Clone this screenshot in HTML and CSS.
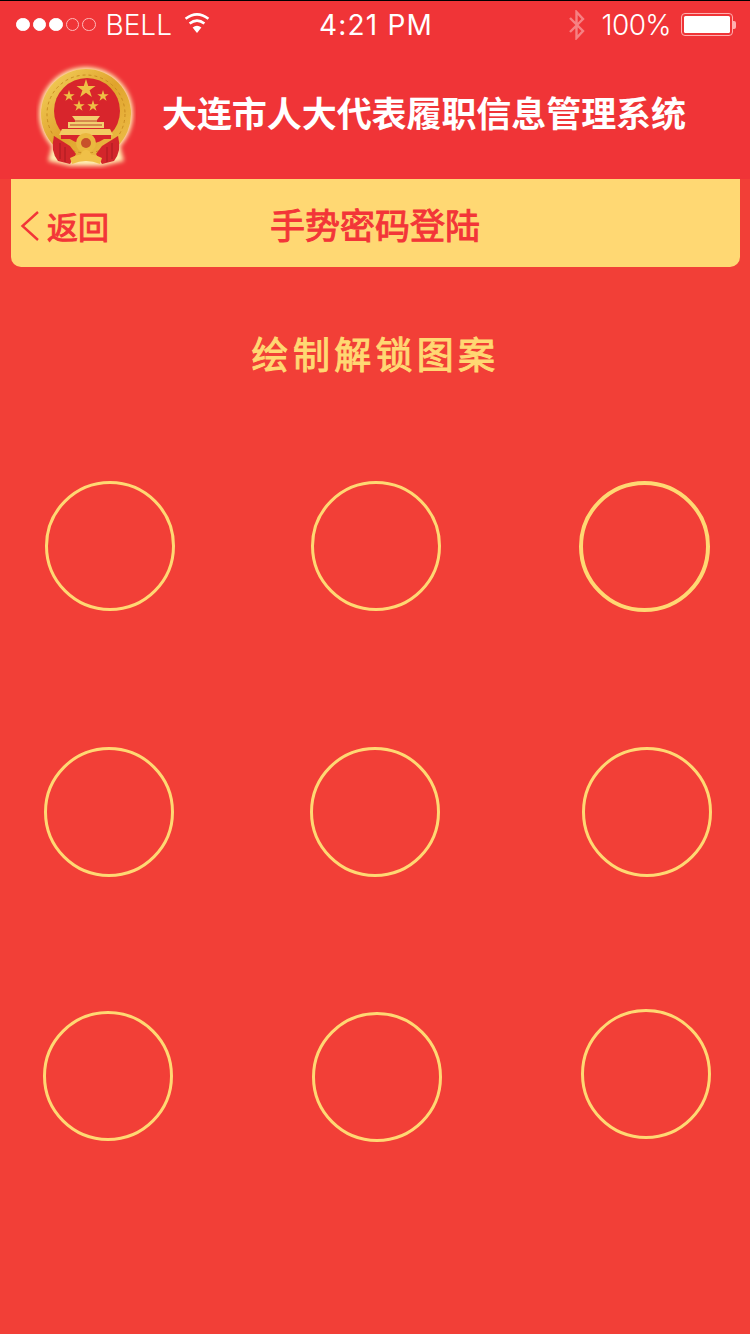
FILE: index.html
```html
<!DOCTYPE html>
<html lang="zh">
<head>
<meta charset="utf-8">
<title>手势密码登陆</title>
<link rel="stylesheet" href="styles.css">
</head>
<body>
<div class="page">
  <header class="top">
    <div class="status">
      <div class="status-left">
        <div class="signal"><i class="dot on"></i><i class="dot on"></i><i class="dot on"></i><i class="dot"></i><i class="dot"></i></div>
        <span class="carrier">BELL</span>
        <svg class="wifi" width="28" height="22" viewBox="0 0 28 22"><path d="M14 21 L9.6 15.6 Q14 12 18.4 15.6 Z" fill="#fff"/><path d="M6.6 11.6 Q14 5.6 21.4 11.6" fill="none" stroke="#fff" stroke-width="2.6"/><path d="M2.6 6.8 Q14 -2.2 25.4 6.8" fill="none" stroke="#fff" stroke-width="2.6"/></svg>
      </div>
      <span class="time">4:21 PM</span>
      <div class="status-right">
        <svg class="bt" width="20" height="30" viewBox="0 0 20 30"><path d="M3 8 L16 21 L9.500 28 V2 L16 9 L3 22" fill="none" stroke="#fff" stroke-opacity=".38" stroke-width="2.400"/></svg>
        <span class="pct">100%</span>
        <div class="battery"><div class="cell"><div class="charge"></div></div><div class="nub"></div></div>
      </div>
    </div>
    <div class="brand">
      <svg class="emblem" width="100" height="106" viewBox="36 62 100 106">
        <defs>
          <filter id="soft" x="-20%" y="-20%" width="140%" height="140%"><feGaussianBlur stdDeviation="2"/></filter>
          <linearGradient id="gold" x1="0" y1="0" x2="1" y2="1"><stop offset="0" stop-color="#f4d35f"/><stop offset=".5" stop-color="#e0a32c"/><stop offset="1" stop-color="#efc14c"/></linearGradient>
          <polygon id="star" points="0,-10 2.245,-3.09 9.51,-3.09 3.633,1.18 5.878,8.09 0,3.82 -5.878,8.09 -3.633,1.18 -9.51,-3.09 -2.245,-3.09" fill="#efbf45"/>
        </defs>
        <ellipse cx="86" cy="113" rx="47" ry="47" fill="#ffeeb0" filter="url(#soft)"/>
        <path d="M52 145 L48 160 L70 165 H102 L124 160 L120 145 Z" fill="#ffeeb0" filter="url(#soft)"/>
        <circle cx="86" cy="113" r="45" fill="url(#gold)"/>
        <circle cx="86" cy="113" r="39" fill="none" stroke="#c98c22" stroke-width="1" stroke-dasharray="3 3"/>
        <circle cx="87" cy="110" r="33" fill="#d8252c"/>
        <use href="#star" transform="translate(86 88)"/>
        <use href="#star" transform="translate(69 95) scale(.6)"/>
        <use href="#star" transform="translate(103 95) scale(.6)"/>
        <use href="#star" transform="translate(79 105) scale(.6)"/>
        <use href="#star" transform="translate(93 105) scale(.6)"/>
        <path d="M72 115 H100 L97 119 V121 H104 V127 H68 V121 H75 V119 Z" fill="#f3cf6f"/>
        <path d="M75 120 H97 M70 124 H102" stroke="#b8422a" stroke-width="1"/>
        <path d="M62 128 H110 L113 134 H59 Z" fill="#f2cb62"/>
        <rect x="61" y="134" width="50" height="4" fill="#d8252c"/>
        <path d="M54 135 L70 145 L76 153 L70 163 L58 160 Q50 150 54 135 Z" fill="#d3262b"/>
        <path d="M118 135 L102 145 L96 153 L102 163 L114 160 Q122 150 118 135 Z" fill="#d3262b"/>
        <path d="M60 142 V158 M65 146 V161 M112 142 V158 M107 146 V161" stroke="#a81a20" stroke-width="1"/>
        <path d="M70 157 Q86 149 102 157 L100 163 Q86 157 72 163 Z" fill="#f0c048"/>
        <circle cx="86" cy="142" r="10" fill="#eab83f"/>
        <circle cx="86" cy="142" r="5" fill="#c8502a"/>
        <circle cx="86" cy="154" r="5" fill="#f0c048"/>
      </svg>
      <h1 class="brand-title">大连市人大代表履职信息管理系统</h1>
    </div>
  </header>
  <nav class="nav">
    <a class="back">
      <svg class="chevron" width="20" height="30" viewBox="0 0 20 30"><path d="M18 1 L2.500 15 L18 29" fill="none" stroke="#f33538" stroke-width="2.400"/></svg>
      <span class="back-label">返回</span>
    </a>
    <h2 class="nav-title">手势密码登陆</h2>
  </nav>
  <main class="lock">
    <p class="prompt">绘制解锁图案</p>
    <div class="row row-a">
      <div class="ring r1"></div><div class="ring r2"></div><div class="ring r3 thick"></div>
    </div>
    <div class="row row-b">
      <div class="ring r4"></div><div class="ring r5"></div><div class="ring r6"></div>
    </div>
    <div class="row row-c">
      <div class="ring r7"></div><div class="ring r8"></div><div class="ring r9"></div>
    </div>
  </main>
</div>
</body>
</html>
```

FILE: styles.css
```css
* { box-sizing: border-box; margin: 0; padding: 0; }
html, body { width: 750px; height: 1334px; overflow: hidden; }
body { background: #f23f37; font-family: "Noto Sans CJK SC", sans-serif; }
.page { width: 750px; height: 1334px; display: flex; flex-direction: column; }

.top { height: 179px; background: #f03437; border-top: 1px solid #000; display: flex; flex-direction: column; }
.status { height: 47px; padding: 0 14px 0 16px; display: flex; align-items: center; justify-content: space-between; color: #fff; font-family: "Inter", "Liberation Sans", sans-serif; font-size: 28px; font-weight: 300; position: relative; }
.status-left, .status-right { display: flex; align-items: center; }
.signal { display: flex; gap: 3px; margin-right: 10px; }
.dot { width: 13.500px; height: 13.500px; border-radius: 50%; border: 1px solid #ffb9b9; display: block; }
.dot.on { background: #fff; border-color: #fff; }
.carrier { margin-right: 11px; letter-spacing: 0; }
.wifi { margin-top: -3px; }
.time { position: absolute; left: 319px; top: 7px; font-weight: 400; letter-spacing: 1.200px; }
.bt { margin-right: 15px; }
.pct { margin-right: 10px; letter-spacing: -.6px; }
.battery { display: flex; align-items: center; }
.cell { width: 52px; height: 23px; border: 1.500px solid #ffb0b0; border-radius: 4px; padding: 2px; }
.charge { width: 100%; height: 100%; background: #fff; border-radius: 1.500px; }
.nub { width: 3px; height: 8px; background: #ffb0b0; border-radius: 0 2px 2px 0; }

.brand { display: flex; align-items: center; padding: 11px 0 0 36px; }
.emblem { flex: none; margin-right: 26px; margin-top: 4px; }
.brand-title { color: #fff; font-size: 35px; line-height: 48px; font-weight: 700; white-space: nowrap; margin-top: -4px; letter-spacing: -.07px; }

.nav { height: 88px; margin: 0 10px 0 11px; background: #ffd873; border-radius: 0 0 10px 10px; display: flex; align-items: center; position: relative; color: #f33538; }
.back { display: flex; align-items: center; padding: 5px 0 0 9px; }
.chevron { margin-right: 7px; }
.back-label { font-size: 31px; font-weight: 400; line-height: 44px; -webkit-text-stroke: 1px #f33538; }
.nav-title { position: absolute; left: 259px; top: 20px; font-size: 35px; line-height: 50px; font-weight: 400; white-space: nowrap; -webkit-text-stroke: 1px #f33538; }

.lock { flex: 1; display: flex; flex-direction: column; }
.prompt { margin-top: 60px; height: 52px; text-align: center; color: #ffd873; font-size: 37px; line-height: 52px; font-weight: 400; letter-spacing: 4.300px; padding-left: 1px; -webkit-text-stroke: 1px #ffd873; }
.row { display: flex; align-items: flex-start; height: 130px; }
.row-a { margin-top: 102px; }
.row-b { margin-top: 136px; }
.row-c { margin-top: 132px; }
.ring { width: 130px; height: 130px; border: 3px solid #ffd873; border-radius: 50%; flex: none; }
.ring.thick { width: 131px; height: 131px; border-width: 4px; }
.r1 { margin-left: 45px; }
.r2 { margin-left: 136px; }
.r3 { margin-left: 138px; }
.r4 { margin-left: 44px; }
.r5 { margin-left: 136px; }
.r6 { margin-left: 142px; }
.r7 { margin-left: 43px; margin-top: 2px; }
.r8 { margin-left: 139px; margin-top: 3px; }
.r9 { margin-left: 139px; }
```
